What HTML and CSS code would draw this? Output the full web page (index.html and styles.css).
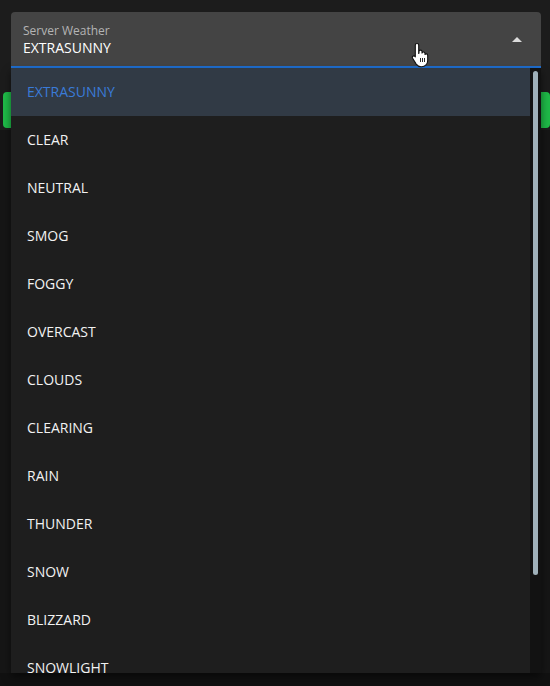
FILE: index.html
```html
<!DOCTYPE html>
<html>
<head>
<meta charset="utf-8">
<link rel="stylesheet" href="styles.css">
</head>
<body>
<div class="page">
  <div class="page-top">
    <div class="btn-row">
      <div class="btn"></div>
      <div class="btn"></div>
    </div>
  </div>
  <div class="page-mid"></div>
  <div class="page-bottom"></div>

  <div class="select">
    <div class="field">
      <div class="field-text">
        <div class="label">Server Weather</div>
        <div class="value">EXTRASUNNY</div>
      </div>
      <div class="caret"></div>
    </div>
    <div class="menu">
      <ul class="options">
        <li class="opt selected">EXTRASUNNY</li>
        <li class="opt">CLEAR</li>
        <li class="opt">NEUTRAL</li>
        <li class="opt">SMOG</li>
        <li class="opt">FOGGY</li>
        <li class="opt">OVERCAST</li>
        <li class="opt">CLOUDS</li>
        <li class="opt">CLEARING</li>
        <li class="opt">RAIN</li>
        <li class="opt">THUNDER</li>
        <li class="opt">SNOW</li>
        <li class="opt">BLIZZARD</li>
        <li class="opt">SNOWLIGHT</li>
      </ul>
      <div class="track"><div class="thumb"></div></div>
    </div>
  </div>

  <svg class="cursor" width="20" height="26" viewBox="0 0 20 26">
    <path d="M6 1.5c1 0 1.7.7 1.7 1.7v8.2l.3-.1V9.6c0-.9.7-1.5 1.5-1.5s1.5.6 1.5 1.5v1.5c.2-.7.8-1.1 1.5-1.1.8 0 1.5.7 1.5 1.5v1c.3-.4.7-.6 1.2-.6.9 0 1.5.7 1.5 1.5v5c0 3.5-2.5 6.3-6 6.3H10c-2.2 0-3.6-1-4.8-2.6L1.6 16.3c-.5-.7-.4-1.6.3-2.1.7-.5 1.6-.4 2.1.2l.3.4V3.2C4.3 2.2 5 1.5 6 1.5z" fill="#fff" stroke="#111" stroke-width="1.1" stroke-linejoin="round"/>
    <path d="M9.5 16v4M11.5 16v4M13.5 16v4" stroke="#111" stroke-width="0.9"/>
  </svg>
</div>
</body>
</html>
```

FILE: styles.css
```css
* { box-sizing: border-box; }
html, body { margin: 0; padding: 0; }
body {
  width: 550px;
  height: 686px;
  overflow: hidden;
  background: #151515;
  font-family: "Open Sans", "Noto Sans", sans-serif;
}
.page {
  position: relative;
  width: 550px;
  height: 686px;
  overflow: hidden;
  display: grid;
  grid-template-rows: 130px 1fr 13px;
}
.page-top {
  background: #1c1c1c;
  padding-top: 92px;
  overflow: hidden;
}
.btn-row {
  display: flex;
  justify-content: space-between;
  padding: 0 0 0 3px;
}
.btn {
  width: 120px;
  height: 36px;
  background: #1fba48;
  border-radius: 4px;
}
.page-mid { background: #161616; }
.page-bottom { background: #111; }

.select {
  position: absolute;
  left: 11px;
  top: 12px;
  width: 530px;
  display: flex;
  flex-direction: column;
}
.field {
  height: 56px;
  background: #444444;
  border-radius: 4px 4px 0 0;
  border-bottom: 2px solid #1f6fd1;
  display: flex;
  align-items: center;
  justify-content: space-between;
  padding: 0 19px 0 12px;
}
.field-text {
  display: flex;
  flex-direction: column;
  padding-top: 2px;
}
.label {
  font-size: 12px;
  line-height: 15px;
  color: #b4b4b4;
}
.value {
  font-size: 14px;
  line-height: 19px;
  color: #ffffff;
}
.caret {
  width: 0;
  height: 0;
  border-left: 5px solid transparent;
  border-right: 5px solid transparent;
  border-bottom: 5px solid #dcdcdc;
  margin-top: 1px;
}
.menu {
  height: 605px;
  display: flex;
  background: #1e1e1e;
  box-shadow: 0 4px 8px rgba(0,0,0,0.5);
  overflow: hidden;
}
.options {
  flex: 1;
  list-style: none;
  margin: 0;
  padding: 0;
}
.opt {
  height: 48px;
  display: flex;
  align-items: center;
  padding-left: 16px;
  padding-bottom: 2px;
  font-size: 14px;
  color: #f2f2f2;
}
.opt.selected {
  background: #313a45;
  color: #3a7bd8;
}
.track {
  width: 11px;
  background: #121212;
  padding: 3px 3px 0 3px;
}
.thumb {
  width: 5px;
  height: 504px;
  background: #9fb0b9;
  border-radius: 3px;
}
.cursor {
  position: absolute;
  left: 411px;
  top: 42px;
}
```
